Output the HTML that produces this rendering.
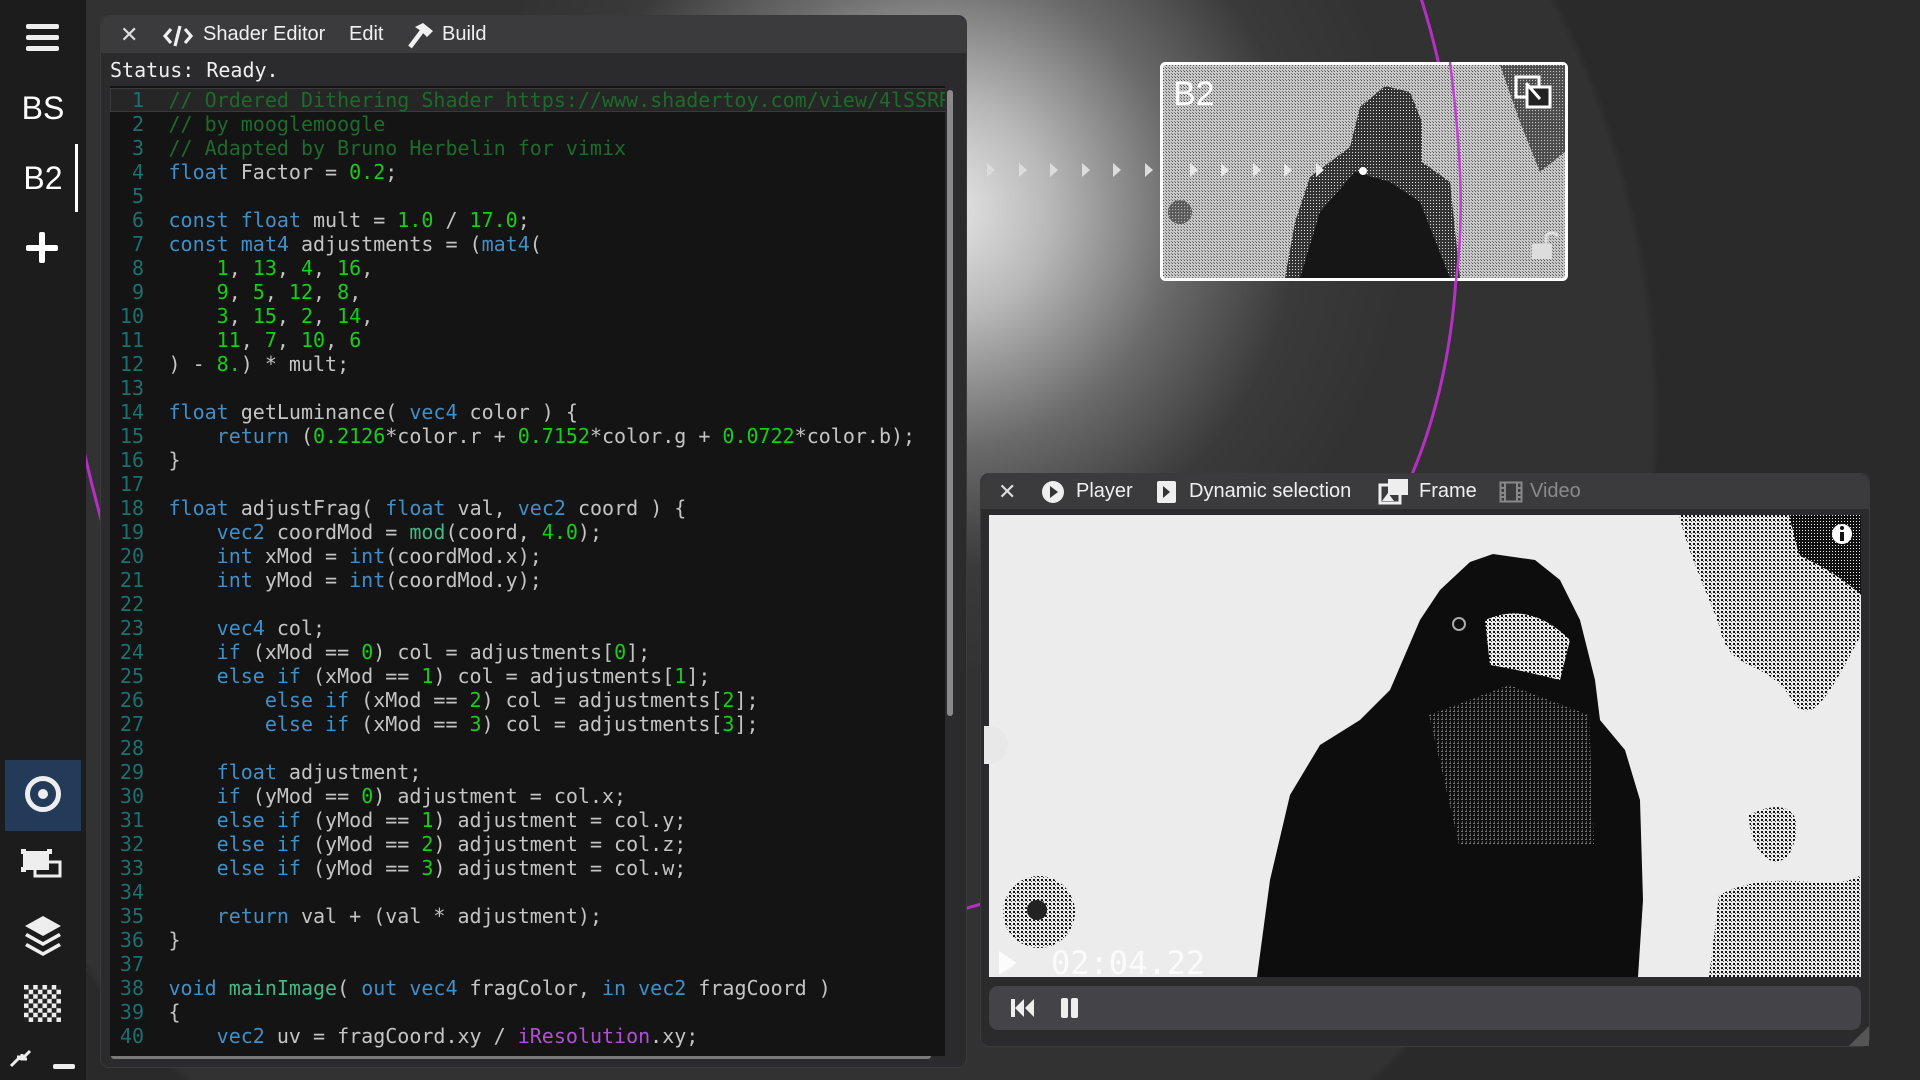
<!DOCTYPE html>
<html><head><meta charset="utf-8"><style>
*{margin:0;padding:0;box-sizing:border-box}
body{width:1920px;height:1080px;overflow:hidden;position:relative;background:#2b2b2b;font-family:"Liberation Sans",sans-serif;color:#eee}
.abs{position:absolute}
#bg{left:0;top:0;width:1920px;height:1080px;background:
radial-gradient(circle at 940px 210px,#e8e8e8 0,#b8b8b8 110px,#6a6a6a 240px,#3a3a3a 360px,rgba(51,51,51,0) 470px),
radial-gradient(ellipse 880px 900px at 780px 420px,#323232 0,#323232 99%,#2a2a2a 100%)}
#side{left:0;top:0;width:86px;height:1080px;background:#1c1c1c}
.win{background:#2b2b2d;border-radius:9px;border:1px solid #3a3a3a}
.tb{position:absolute;left:0;right:0;top:0;background:#3b3b3d;border-radius:9px 9px 0 0}
.tt{position:absolute;font-size:20px;color:#f0f0f0;white-space:nowrap}
#code{left:110px;top:86px;width:840px;height:970px;background:#141414;overflow:hidden;font-family:"DejaVu Sans Mono","Liberation Mono",monospace;font-size:20px}
.ln{height:24px;line-height:24px;white-space:pre;color:#c4c4c4;position:relative}
.ln i{font-style:normal;display:inline-block;width:34px;text-align:right;color:#1b7070;margin-right:24.5px}
.k{color:#3f8fc8}.n{color:#14d014}.c{color:#1d6a2c}.f{color:#44b886}.p{color:#b04fd6}
</style></head><body>
<div id="bg" class="abs"></div>
<svg class="abs" style="left:0;top:0" width="1920" height="1080">
<path d="M1420,-5 C1470,150 1472,330 1413,472 C1330,700 1150,860 960,910" fill="none" stroke="#b52fc4" stroke-width="3"/>
<path d="M78,425 Q90,480 104,530" fill="none" stroke="#b52fc4" stroke-width="3"/>
<g fill="#dcdcdc">
<polygon points="987,163 995,170 987,177"/><polygon points="1019,163 1027,170 1019,177"/><polygon points="1050,163 1058,170 1050,177"/><polygon points="1082,163 1090,170 1082,177"/><polygon points="1113,163 1121,170 1113,177"/><polygon points="1145,163 1153,170 1145,177"/>
</g>
</svg>

<div id="side" class="abs">
<div class="abs" style="left:26px;top:24px;width:33px;height:5px;background:#eee;border-radius:2px"></div>
<div class="abs" style="left:26px;top:35px;width:33px;height:5px;background:#eee;border-radius:2px"></div>
<div class="abs" style="left:26px;top:46px;width:33px;height:5px;background:#eee;border-radius:2px"></div>
<div class="abs" style="left:0;width:86px;top:90px;text-align:center;font-size:32px;color:#fff">BS</div>
<div class="abs" style="left:0;width:86px;top:160px;text-align:center;font-size:32px;color:#fff">B2</div>
<div class="abs" style="left:75px;top:144px;width:3px;height:68px;background:#fff"></div>
<div class="abs" style="left:39px;top:232px;width:6px;height:31px;background:#fff;border-radius:2px"></div>
<div class="abs" style="left:26px;top:245px;width:32px;height:6px;background:#fff;border-radius:2px"></div>
<div class="abs" style="left:5px;top:760px;width:76px;height:71px;background:#233a58"></div>
<svg class="abs" style="left:0;top:740px" width="86" height="340">
<circle cx="43" cy="54" r="15.5" fill="none" stroke="#eee" stroke-width="5"/><circle cx="43" cy="54" r="5" fill="#eee"/>
<rect x="23" y="111" width="26" height="19" fill="#eee"/><rect x="21" y="109" width="5" height="5" fill="#eee"/><rect x="47" y="109" width="5" height="5" fill="#eee"/><rect x="21" y="127" width="5" height="5" fill="#eee"/>
<rect x="35" y="122" width="25" height="14" fill="none" stroke="#eee" stroke-width="3"/>
<path d="M43,176 L61,186 L43,196 L25,186Z" fill="#eee"/><path d="M27,193 L43,202 L59,193 L61,196 L43,206 L25,196Z" fill="#eee"/><path d="M27,203 L43,212 L59,203 L61,206 L43,216 L25,206Z" fill="#eee"/>
<path d="M11,326 L20,317 M17,317 L20,317 L20,320 M30,311 L22,319 M22,314 L22,319 L27,319" stroke="#eee" stroke-width="3" fill="none"/>
<rect x="53" y="324" width="22" height="5" rx="2" fill="#eee"/>
</svg>
<svg class="abs" style="left:24px;top:985px" width="37" height="37"><defs><pattern id="ck" width="9.25" height="9.25" patternUnits="userSpaceOnUse"><rect width="4.6" height="4.6" fill="#eee"/><rect x="4.6" y="4.6" width="4.6" height="4.6" fill="#eee"/><rect x="4.6" width="4.6" height="4.6" fill="#222"/><rect y="4.6" width="4.6" height="4.6" fill="#222"/></pattern></defs><rect width="37" height="37" fill="url(#ck)"/></svg>
</div>

<!-- Shader editor -->
<div class="abs win" style="left:100px;top:15px;width:867px;height:1053px">
<div class="tb" style="height:37px"></div>
<div class="tt" style="left:19px;top:6px;font-size:22px;color:#ddd">✕</div>
<svg class="abs" style="left:62px;top:8px" width="30" height="24"><path d="M8,5 L2,12 L8,19 M22,5 L28,12 L22,19 M17,2 L12,22" stroke="#f0f0f0" stroke-width="3.2" fill="none"/></svg>
<div class="tt" style="left:102px;top:7px">Shader Editor</div>
<div class="tt" style="left:248px;top:7px">Edit</div>
<svg class="abs" style="left:306px;top:5px" width="28" height="28"><path d="M3,26 L15,10" stroke="#f0f0f0" stroke-width="4.5"/><path d="M8,6 L16,2 L26,10 L20,16 L14,10Z" fill="#f0f0f0"/></svg>
<div class="tt" style="left:341px;top:7px">Build</div>
<div class="abs" style="left:9px;top:42px;font-family:'DejaVu Sans Mono',monospace;font-size:20px;color:#f0f0f0">Status: Ready.</div>
<div class="abs" style="left:846px;top:74px;width:6px;height:626px;background:#8a8a8a;border-radius:3px"></div>
<div class="abs" style="left:10px;top:1036px;width:820px;height:7px;background:#7a7a7a;border-radius:3px"></div>
</div>
<div id="code" class="abs" style="width:835px">
<div class="abs" style="left:0;top:2px;width:840px;height:24px;background:#262626;border:1px solid #3a3a3a"></div>
<div style="height:2px"></div>
<div class="ln"><i>1</i><span class="c">// Ordered Dithering Shader https://www.shadertoy.com/view/4lSSRR</span></div>
<div class="ln"><i>2</i><span class="c">// by mooglemoogle</span></div>
<div class="ln"><i>3</i><span class="c">// Adapted by Bruno Herbelin for vimix</span></div>
<div class="ln"><i>4</i><span class="k">float</span> Factor = <span class="n">0.2</span>;</div>
<div class="ln"><i>5</i></div>
<div class="ln"><i>6</i><span class="k">const float</span> mult = <span class="n">1.0</span> / <span class="n">17.0</span>;</div>
<div class="ln"><i>7</i><span class="k">const mat4</span> adjustments = (<span class="k">mat4</span>(</div>
<div class="ln"><i>8</i>    <span class="n">1</span>, <span class="n">13</span>, <span class="n">4</span>, <span class="n">16</span>,</div>
<div class="ln"><i>9</i>    <span class="n">9</span>, <span class="n">5</span>, <span class="n">12</span>, <span class="n">8</span>,</div>
<div class="ln"><i>10</i>    <span class="n">3</span>, <span class="n">15</span>, <span class="n">2</span>, <span class="n">14</span>,</div>
<div class="ln"><i>11</i>    <span class="n">11</span>, <span class="n">7</span>, <span class="n">10</span>, <span class="n">6</span></div>
<div class="ln"><i>12</i>) - <span class="n">8.</span>) * mult;</div>
<div class="ln"><i>13</i></div>
<div class="ln"><i>14</i><span class="k">float</span> getLuminance( <span class="k">vec4</span> color ) {</div>
<div class="ln"><i>15</i>    <span class="k">return</span> (<span class="n">0.2126</span>*color.r + <span class="n">0.7152</span>*color.g + <span class="n">0.0722</span>*color.b);</div>
<div class="ln"><i>16</i>}</div>
<div class="ln"><i>17</i></div>
<div class="ln"><i>18</i><span class="k">float</span> adjustFrag( <span class="k">float</span> val, <span class="k">vec2</span> coord ) {</div>
<div class="ln"><i>19</i>    <span class="k">vec2</span> coordMod = <span class="f">mod</span>(coord, <span class="n">4.0</span>);</div>
<div class="ln"><i>20</i>    <span class="k">int</span> xMod = <span class="k">int</span>(coordMod.x);</div>
<div class="ln"><i>21</i>    <span class="k">int</span> yMod = <span class="k">int</span>(coordMod.y);</div>
<div class="ln"><i>22</i></div>
<div class="ln"><i>23</i>    <span class="k">vec4</span> col;</div>
<div class="ln"><i>24</i>    <span class="k">if</span> (xMod == <span class="n">0</span>) col = adjustments[<span class="n">0</span>];</div>
<div class="ln"><i>25</i>    <span class="k">else if</span> (xMod == <span class="n">1</span>) col = adjustments[<span class="n">1</span>];</div>
<div class="ln"><i>26</i>        <span class="k">else if</span> (xMod == <span class="n">2</span>) col = adjustments[<span class="n">2</span>];</div>
<div class="ln"><i>27</i>        <span class="k">else if</span> (xMod == <span class="n">3</span>) col = adjustments[<span class="n">3</span>];</div>
<div class="ln"><i>28</i></div>
<div class="ln"><i>29</i>    <span class="k">float</span> adjustment;</div>
<div class="ln"><i>30</i>    <span class="k">if</span> (yMod == <span class="n">0</span>) adjustment = col.x;</div>
<div class="ln"><i>31</i>    <span class="k">else if</span> (yMod == <span class="n">1</span>) adjustment = col.y;</div>
<div class="ln"><i>32</i>    <span class="k">else if</span> (yMod == <span class="n">2</span>) adjustment = col.z;</div>
<div class="ln"><i>33</i>    <span class="k">else if</span> (yMod == <span class="n">3</span>) adjustment = col.w;</div>
<div class="ln"><i>34</i></div>
<div class="ln"><i>35</i>    <span class="k">return</span> val + (val * adjustment);</div>
<div class="ln"><i>36</i>}</div>
<div class="ln"><i>37</i></div>
<div class="ln"><i>38</i><span class="k">void</span> <span class="f">mainImage</span>( <span class="k">out vec4</span> fragColor, <span class="k">in vec2</span> fragCoord )</div>
<div class="ln"><i>39</i>{</div>
<div class="ln"><i>40</i>    <span class="k">vec2</span> uv = fragCoord.xy / <span class="p">iResolution</span>.xy;</div>
</div>

<!-- B2 card -->
<svg class="abs" style="left:1160px;top:62px" width="408" height="219">
<defs>
<pattern id="d1" width="3" height="3" patternUnits="userSpaceOnUse"><rect width="3" height="3" fill="#c8c8c8"/><rect width="1" height="1" fill="#555"/><rect x="2" y="2" width="1" height="1" fill="#777"/></pattern>
<pattern id="d2" width="3" height="3" patternUnits="userSpaceOnUse"><rect width="3" height="3" fill="#333"/><rect width="1" height="1" fill="#ddd"/></pattern>
</defs>
<rect x="1.5" y="1.5" width="405" height="216" rx="4" fill="url(#d1)" stroke="#fff" stroke-width="3"/>
<path d="M125,216 L135,160 L150,115 L190,85 L200,45 L225,24 L250,30 L262,60 L262,100 L290,120 L300,216Z" fill="url(#d2)"/>
<path d="M140,216 L160,150 L195,110 L230,120 L260,140 L290,216Z" fill="#161616"/>
<path d="M340,3 L405,3 L405,90 L380,110 L360,60Z" fill="url(#d2)" opacity=".8"/>
<circle cx="20" cy="150" r="12" fill="url(#d2)" opacity=".7"/>
<path d="M290,0 C300,80 305,150 296,219" stroke="#c040d0" stroke-width="2.5" fill="none"/>
<g fill="#e8e8e8"><polygon points="30,101 38,108 30,115"/><polygon points="61,101 69,108 61,115"/><polygon points="93,101 101,108 93,115"/><polygon points="124,101 132,108 124,115"/><polygon points="156,101 164,108 156,115"/></g>
<circle cx="203" cy="109" r="4" fill="#fff"/>
<text x="13" y="43" font-family="Liberation Sans" font-size="34" fill="#fff">B2</text>
<rect x="356" y="15" width="23" height="20" fill="none" stroke="#fff" stroke-width="3"/>
<rect x="367" y="25" width="23" height="20" fill="#222" stroke="#fff" stroke-width="3"/>
<path d="M366,21 L380,37" stroke="#fff" stroke-width="3"/>
<rect x="372" y="182" width="20" height="15" fill="#ddd"/><path d="M386,182 L386,174 Q392,168 398,174" stroke="#ddd" stroke-width="3" fill="none"/>
</svg>

<!-- Player -->
<div class="abs win" style="left:980px;top:473px;width:890px;height:574px">
<div class="tb" style="height:35px"></div>
<div class="tt" style="left:17px;top:5px;font-size:22px;color:#ddd">✕</div>
<svg class="abs" style="left:60px;top:6px" width="24" height="24"><circle cx="12" cy="12" r="11" fill="#eee"/><path d="M9,6 L17,12 L9,18Z" fill="#333"/></svg>
<div class="tt" style="left:95px;top:6px">Player</div>
<svg class="abs" style="left:175px;top:6px" width="22" height="24"><rect x="1" y="1" width="19" height="22" rx="2" fill="#eee"/><path d="M7,6 L14,12 L7,18Z" fill="#333"/></svg>
<div class="tt" style="left:208px;top:6px">Dynamic selection</div>
<svg class="abs" style="left:397px;top:3px" width="32" height="28"><rect x="2" y="8" width="20" height="18" fill="none" stroke="#eee" stroke-width="3"/><rect x="10" y="2" width="20" height="16" fill="#eee"/><path d="M4,24 L10,16 L16,24Z" fill="#eee"/></svg>
<div class="tt" style="left:438px;top:6px">Frame</div>
<svg class="abs" style="left:518px;top:7px" width="24" height="22"><rect x="1.5" y="1.5" width="21" height="19" fill="none" stroke="#888" stroke-width="2"/><path d="M6,2 V20 M18,2 V20 M2,7 H6 M2,12 H6 M2,16 H6 M18,7 H22 M18,12 H22 M18,16 H22" stroke="#888" stroke-width="2"/></svg>
<div class="tt" style="left:549px;top:6px;color:#8a8a8a">Video</div>
<div class="abs" style="left:8px;top:512px;width:872px;height:44px;background:#444448;border-radius:9px"></div>
<svg class="abs" style="left:30px;top:522px" width="70" height="24"><rect x="0" y="3" width="4" height="18" fill="#eee"/><path d="M13,3 L4,12 L13,21Z M23,3 L14,12 L23,21Z" fill="#eee"/><rect x="50" y="2" width="7" height="20" rx="2" fill="#eee"/><rect x="60" y="2" width="7" height="20" rx="2" fill="#eee"/></svg>
<svg class="abs" style="left:866px;top:552px" width="22" height="20"><path d="M22,0 L22,20 L2,20Z" fill="#555"/></svg>
</div>
<svg class="abs" style="left:989px;top:515px" width="872" height="462">
<defs>
<pattern id="g1" width="4" height="4" patternUnits="userSpaceOnUse"><rect width="4" height="4" fill="#ececec"/><rect width="2" height="2" fill="#111"/><rect x="2" y="2" width="1" height="1" fill="#444"/></pattern>
<pattern id="g2" width="3" height="3" patternUnits="userSpaceOnUse"><rect width="3" height="3" fill="#111"/><rect width="1" height="1" fill="#eee"/></pattern>
<pattern id="g3" width="4" height="4" patternUnits="userSpaceOnUse"><rect width="4" height="4" fill="#111"/><rect width="2" height="1" fill="#ccc"/><rect x="1" y="2" width="1" height="2" fill="#888"/></pattern>
</defs>
<rect width="872" height="462" fill="#ececec"/>
<path d="M690,0 L872,0 L872,120 C840,180 820,220 800,180 C770,140 740,160 730,110 C715,70 700,40 690,0Z" fill="url(#g1)"/>
<path d="M800,0 L872,0 L872,80 C850,60 830,50 810,40Z" fill="url(#g2)"/>
<path d="M760,300 C800,280 820,300 800,340 C780,360 760,330 760,300Z" fill="url(#g1)"/>
<path d="M730,380 C790,350 840,380 872,360 L872,462 L720,462Z" fill="url(#g1)"/>
<circle cx="50" cy="397" r="36" fill="url(#g1)"/>
<circle cx="48" cy="395" r="10" fill="#222"/>
<path d="M268,462 L281,365 L301,280 L331,230 L371,205 L401,175 L431,105 L451,75 L481,47 L504,39 L546,45 L571,65 L591,105 L606,165 L611,205 L636,235 L651,285 L654,385 L649,462Z" fill="#0d0d0d"/>
<path d="M496,105 Q541,85 581,125 L571,165 Q531,155 501,150Z" fill="url(#g1)"/>
<path d="M440,200 L520,170 L600,200 L605,330 L470,330Z" fill="url(#g3)" opacity=".55"/>
<circle cx="470" cy="109" r="6" fill="none" stroke="#aaa" stroke-width="2"/>
<path d="M10,436 L10,460 L28,448Z" fill="rgba(255,255,255,.85)"/>
<text x="62" y="459" font-family="DejaVu Sans Mono,monospace" font-size="32" fill="rgba(255,255,255,.8)">02:04.22</text>
<circle cx="853" cy="19" r="10" fill="#fff"/><rect x="851" y="17" width="4" height="9" fill="#111"/><circle cx="853" cy="13" r="2" fill="#111"/>
</svg>
<div class="abs" style="left:984px;top:726px;width:24px;height:38px;background:#e8e8e8;border-radius:0 19px 19px 0"></div>
</body></html>
